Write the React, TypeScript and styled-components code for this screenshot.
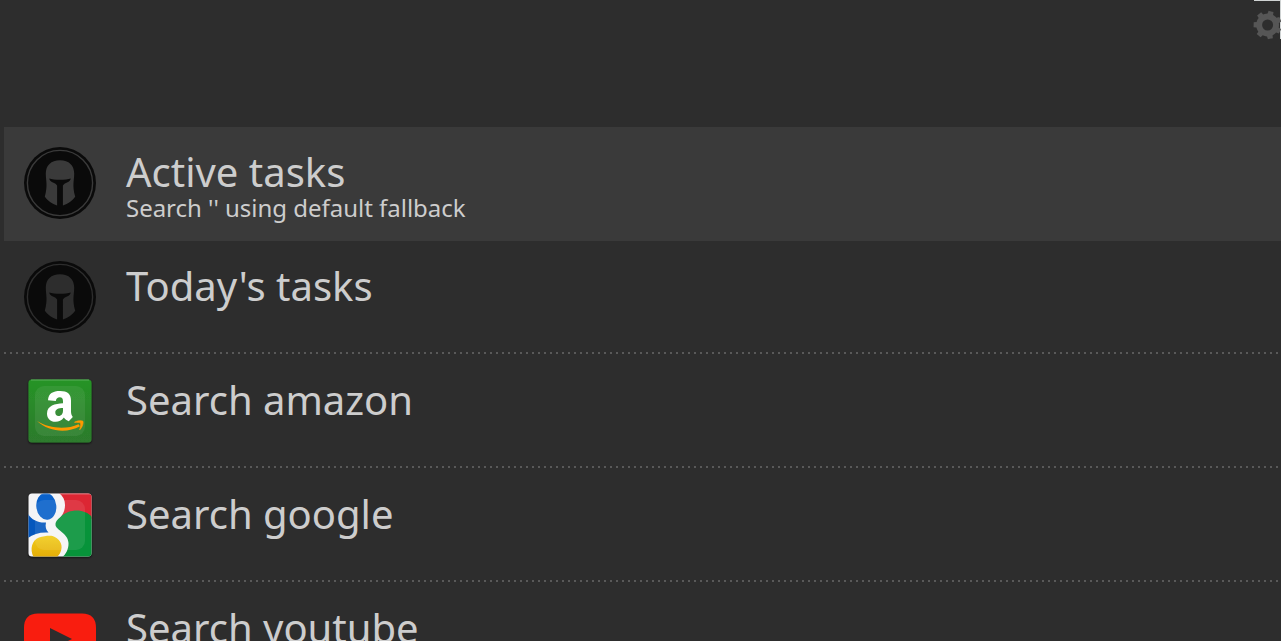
import React from 'react';
import styled, { createGlobalStyle } from 'styled-components';

const Global = createGlobalStyle`
  * { box-sizing: border-box; }
  html, body { margin: 0; background: #2d2d2d; overflow: hidden; }
`;

const Launcher = styled.main`
  display: flex;
  flex-direction: column;
  width: 100%;
  height: 641px;
  overflow: hidden;
  background: #2d2d2d;
  color: #cdcdcd;
  font-family: 'Noto Sans', sans-serif;
`;

const SearchBar = styled.header`
  display: flex;
  justify-content: flex-end;
  flex: 0 0 127px;
`;

const SettingsButton = styled.button`
  width: 27px;
  height: 39px;
  padding: 10px 0 0;
  border: 0;
  border-top: 1px solid #cfd3d3;
  border-right: 1px solid #cfd3d3;
  background: transparent;
  svg { display: block; overflow: visible; }
`;

const Results = styled.ul`
  margin: 0;
  padding: 0 0 0 4px;
  list-style: none;
`;

const Row = styled.li<{ $selected?: boolean }>`
  display: flex;
  gap: 30px;
  height: 114px;
  padding: 20px 20px 0;
  background-color: ${p => (p.$selected ? '#3a3a3a' : 'transparent')};
  background-image: ${p => (p.$selected ? 'none' : 'linear-gradient(90deg, #595959 2px, transparent 2px)')};
  background-size: 6px 2px;
  background-position: 0 111px;
  background-repeat: repeat-x;
`;

const IconBox = styled.div`
  flex: 0 0 72px;
  height: 72px;
  svg { display: block; overflow: visible; }
`;

const Labels = styled.div`
  display: flex;
  flex-direction: column;
  white-space: nowrap;
`;

const Title = styled.div`
  height: 49px;
  font-size: 40px;
  line-height: 50px;
`;

const Subtitle = styled.div`
  height: 24px;
  font-size: 24px;
  line-height: 24px;
  letter-spacing: -0.02px;
`;

const gearPath = (teeth: number, cx: number, cy: number, outer: number, inner: number, turn: number) => {
  const step = (Math.PI * 2) / teeth;
  const pts: string[] = [];
  for (let i = 0; i < teeth; i++) {
    const a = turn + i * step;
    [[-0.42, inner], [-0.28, inner], [-0.2, outer], [0.2, outer], [0.28, inner], [0.42, inner]].forEach(([t, r]) => {
      pts.push(`${(cx + Math.cos(a + t * step) * r).toFixed(2)} ${(cy + Math.sin(a + t * step) * r).toFixed(2)}`);
    });
  }
  return `M${pts.join('L')}Z`;
};

const Gear = () => (
  <svg width="26" height="28" viewBox="0 0 26 28">
    <path
      d={`${gearPath(7, 13.6, 14, 14.2, 11.4, 1.37)}M19.1 14a5.5 5.5 0 1 0-11 0a5.5 5.5 0 1 0 11 0Z`}
      fill="#565656"
      fillRule="evenodd"
    />
  </svg>
);

const Spartan = ({ face }: { face: string }) => (
  <svg width="72" height="72" viewBox="0 0 72 72">
    <circle cx="36" cy="36" r="36" fill="#0a0a0a" />
    <circle cx="36" cy="36" r="32.6" fill="none" stroke={face} strokeWidth="1.4" />
    <path
      d="M36 13.3C45 13.3 50.200 18.700 50.200 26.500C50.200 34 48 38 51.200 49.700C48.500 53.500 44 56.800 38.900 58.500V38.500Q40 36.500 43 35.500Q46.500 34 46.700 31.400C42 33.200 30 33.200 25.300 31.400Q25.500 34 29 35.500Q32 36.500 33.100 38.500V58.500C28 56.800 23.500 53.500 20.800 49.700C24 38 21.800 34 21.800 26.500C21.800 18.700 27 13.300 36 13.300Z"
      fill={face}
    />
  </svg>
);

const Amazon = () => (
  <svg width="72" height="72" viewBox="0 0 72 72">
    <defs>
      <linearGradient id="amazonTile" x1="0" y1="0" x2="0" y2="1">
        <stop offset="0" stopColor="#279427" />
        <stop offset="1" stopColor="#2d7a2d" />
      </linearGradient>
      <filter id="tileShadow" x="-20%" y="-20%" width="140%" height="140%">
        <feDropShadow dx="0" dy="1" stdDeviation="1" floodColor="#000" floodOpacity=".75" />
      </filter>
    </defs>
    <rect x="4.500" y="4.500" width="63" height="63" rx="3.500" fill="url(#amazonTile)" filter="url(#tileShadow)" />
    <path d="M7 5H65" stroke="#69b569" strokeOpacity=".8" strokeWidth="1" />
    <rect x="11" y="11" width="50" height="50" rx="9" fill="#fff" fillOpacity=".07" />
    <path
      d="M24 25.200C24.300 18.500 29 16 36 16C43.500 16 47 19 47 25.500V36.500C47 38.800 47.600 40.200 48.800 41.900L44.800 46.200C42.800 45.500 41 44.200 39.900 42.600C37.500 45.500 35 46.800 31.500 46.800C26.300 46.800 23 43.500 23 38.500C23 30.500 31 28.600 39 28.200V26.200C39 23.500 38 22.300 35.800 22.300C33.500 22.300 32.300 23.500 31.800 26ZM39 33C34.300 33 31.300 34.200 31.300 37.500C31.300 39.700 32.500 41 34.500 41C37.500 41 39 38.500 39 35.500Z"
      fill="#fff"
      fillRule="evenodd"
    />
    <path d="M13 46C26 54 43 54.600 54.500 49.200L56 51.200C43 58.500 25 57 13 46Z" fill="#ff9900" />
    <path d="M50.500 47.300C53.500 45.300 58 45.500 59 46.300C59.500 48.500 58.300 52.500 55.700 54.800C56.700 51 57 49 56.500 48C55.500 47.400 53 47.500 50.500 47.300Z" fill="#ff9900" stroke="#ff9900" strokeWidth=".7" />
  </svg>
);

const Google = () => (
  <svg width="72" height="72" viewBox="0 0 72 72">
    <defs>
      <clipPath id="googleTile">
        <rect x="4.500" y="4.500" width="63" height="63" rx="3.500" />
      </clipPath>
      <linearGradient id="googleYellow" x1="0" y1="0" x2="0" y2="1">
        <stop offset="0" stopColor="#f1cc19" />
        <stop offset="1" stopColor="#e4ad08" />
      </linearGradient>
    </defs>
    <rect x="4.500" y="4.500" width="63" height="63" rx="3.500" fill="#222" filter="url(#tileShadow)" />
    <g clipPath="url(#googleTile)">
      <rect x="4" y="4" width="64" height="64" fill="#f4f4f6" />
      <path d="M35 4H68V30H35C39.500 25 41 21 41 16C41 11 39 7 35 4Z" fill="#dc2633" />
      <path d="M68 28C61 20 46 19 36.500 28C33 31 31 33 31.500 36C32 41 44 44 44.500 54C44.700 60 42 65 38.500 68H68Z" fill="#07933a" />
      <path d="M4 25C8 31 14 34 22 33.500C21 38 22 41 24.500 43.500C16 43 9 45 4 49Z" fill="#0557bd" />
      <ellipse cx="22.300" cy="17.300" rx="10" ry="13.500" transform="rotate(-6 22.300 17.300)" fill="#0961ca" />
      <path d="M9.500 68C5.500 60 8 51 15 48.500C20 47 25 46.500 28.500 47C35 49 39 55 37.200 61C36.500 64 35 66 33 68Z" fill="url(#googleYellow)" />
      <rect x="11" y="11" width="50" height="50" rx="9" fill="#fff" fillOpacity=".09" />
      <path d="M4 5H68" stroke="#fff" strokeOpacity=".3" />
    </g>
  </svg>
);

const Youtube = () => (
  <svg width="72" height="72" viewBox="0 0 72 72">
    <path d="M14 10.500H58Q72 10.500 72 25V47Q72 61.500 58 61.500H14Q0 61.500 0 47V25Q0 10.500 14 10.500ZM26 25V47L48 36Z" fill="#f91d0f" fillRule="evenodd" />
  </svg>
);

const results = [
  { title: 'Active tasks', subtitle: "Search '' using default fallback", icon: <Spartan face="#3a3a3a" />, selected: true },
  { title: "Today's tasks", icon: <Spartan face="#2d2d2d" /> },
  { title: 'Search amazon', icon: <Amazon /> },
  { title: 'Search google', icon: <Google /> },
  { title: 'Search youtube', icon: <Youtube /> },
];

export default function App() {
  return (
    <Launcher>
      <Global />
      <SearchBar>
        <SettingsButton aria-label="Settings">
          <Gear />
        </SettingsButton>
      </SearchBar>
      <Results>
        {results.map(r => (
          <Row key={r.title} $selected={r.selected}>
            <IconBox>{r.icon}</IconBox>
            <Labels>
              <Title>{r.title}</Title>
              {r.subtitle && <Subtitle>{r.subtitle}</Subtitle>}
            </Labels>
          </Row>
        ))}
      </Results>
    </Launcher>
  );
}
